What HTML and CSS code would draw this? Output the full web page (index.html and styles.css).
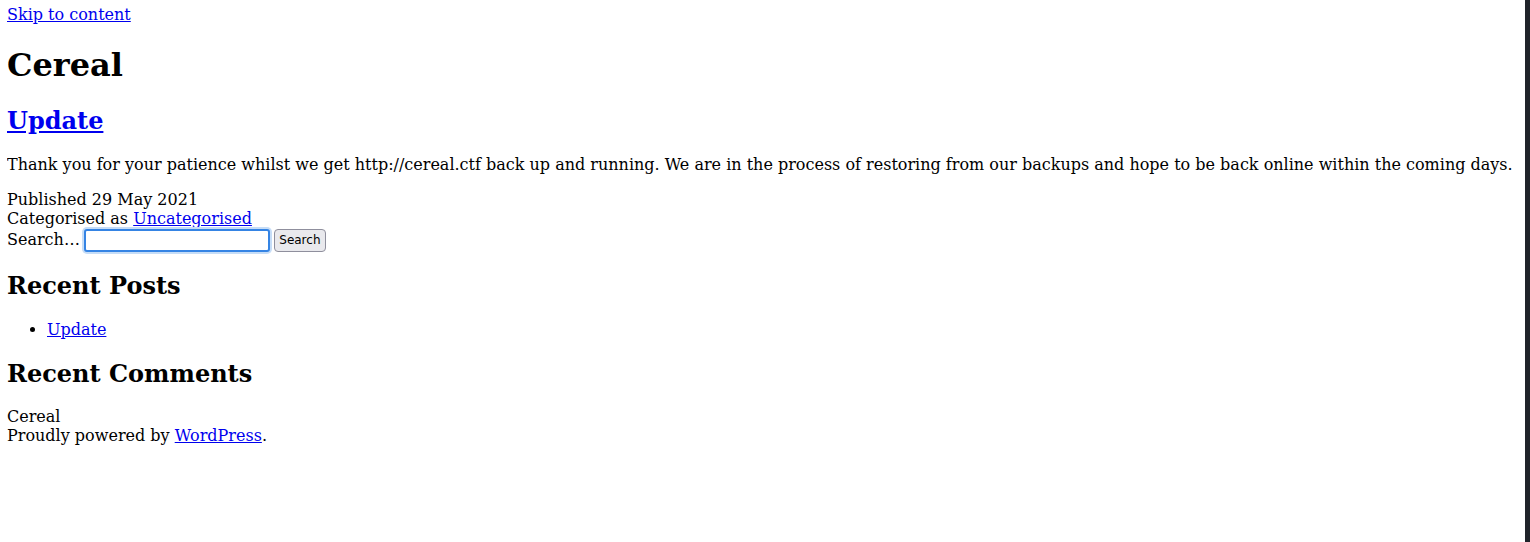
FILE: index.html
```html
<!DOCTYPE html>
<html lang="en-GB" class="page-root">
<head>
<meta charset="utf-8">
<title>Cereal</title>
<link rel="stylesheet" href="styles.css">
</head>
<body class="page">
<a class="skip-link" href="#content">Skip to content</a>
<header class="site-header">
<h1 class="site-title">Cereal</h1>
</header>
<main id="content" class="site-main">
<article class="post">
<h2 class="entry-title"><a href="#">Update</a></h2>
<p class="entry-content">Thank you for your patience whilst we get http://cereal.ctf back up and running. We are in the process of restoring from our backups and hope to be back online within the coming days.</p>
<footer class="entry-footer">
<div class="posted-on">Published 29 May 2021</div>
<div class="cat-links">Categorised as <a href="#">Uncategorised</a></div>
</footer>
</article>
</main>
<aside class="widget-area">
<form class="search-form" role="search">
<label for="s" class="search-label">Search…</label>
<input type="search" id="s" class="search-field">
<input type="submit" class="search-submit" value="Search">
</form>
<section class="widget">
<h2 class="widget-title">Recent Posts</h2>
<ul class="widget-list">
<li><a href="#">Update</a></li>
</ul>
</section>
<section class="widget">
<h2 class="widget-title">Recent Comments</h2>
</section>
</aside>
<footer class="site-footer">
<div class="site-name">Cereal</div>
<div class="powered-by">Proudly powered by <a href="#">WordPress</a>.</div>
</footer>
</body>
</html>
```
FILE: styles.css
```css
.page-root {
  box-sizing: border-box;
  min-height: 100%;
  border-right: 5px solid #20232a;
  background: #ffffff;
}

.page {
  margin: 5px 8px 8px 7px;
  font-family: "DejaVu Serif", serif;
  font-size: 16px;
  color: #000000;
}

.skip-link {
  display: block;
  width: max-content;
  line-height: 19px;
  padding-bottom: 1px;
}

.site-title {
  font-size: 2em;
  margin: 0.67em 0;
}

.entry-title,
.widget-title {
  font-size: 1.5em;
  margin: 0.83em 0;
}

.entry-content {
  margin: 1em 0;
}

.search-form {
  display: flex;
  align-items: flex-end;
  gap: 4px;
  height: 24px;
  margin-bottom: -1px;
}

.search-label {
  align-self: center;
}

.search-field {
  box-sizing: border-box;
  width: 186px;
  height: 23px;
  margin: 0;
  padding: 0 4px;
  border: 2px solid #3584e4;
  border-radius: 3px;
  box-shadow: 0 0 0 2px #c6ddf7;
  outline: none;
  background: #ffffff;
  font-family: "DejaVu Sans", sans-serif;
  font-size: 13.33px;
}

.search-submit {
  box-sizing: border-box;
  width: 52px;
  height: 23px;
  margin: 0;
  padding: 0;
  border: 1px solid #8f8f9d;
  border-radius: 4px;
  background: #e9e9ed;
  color: #000000;
  font-family: "DejaVu Sans", sans-serif;
  font-size: 12px;
}

.widget-list {
  margin: 1em 0;
  padding-left: 40px;
}
```
